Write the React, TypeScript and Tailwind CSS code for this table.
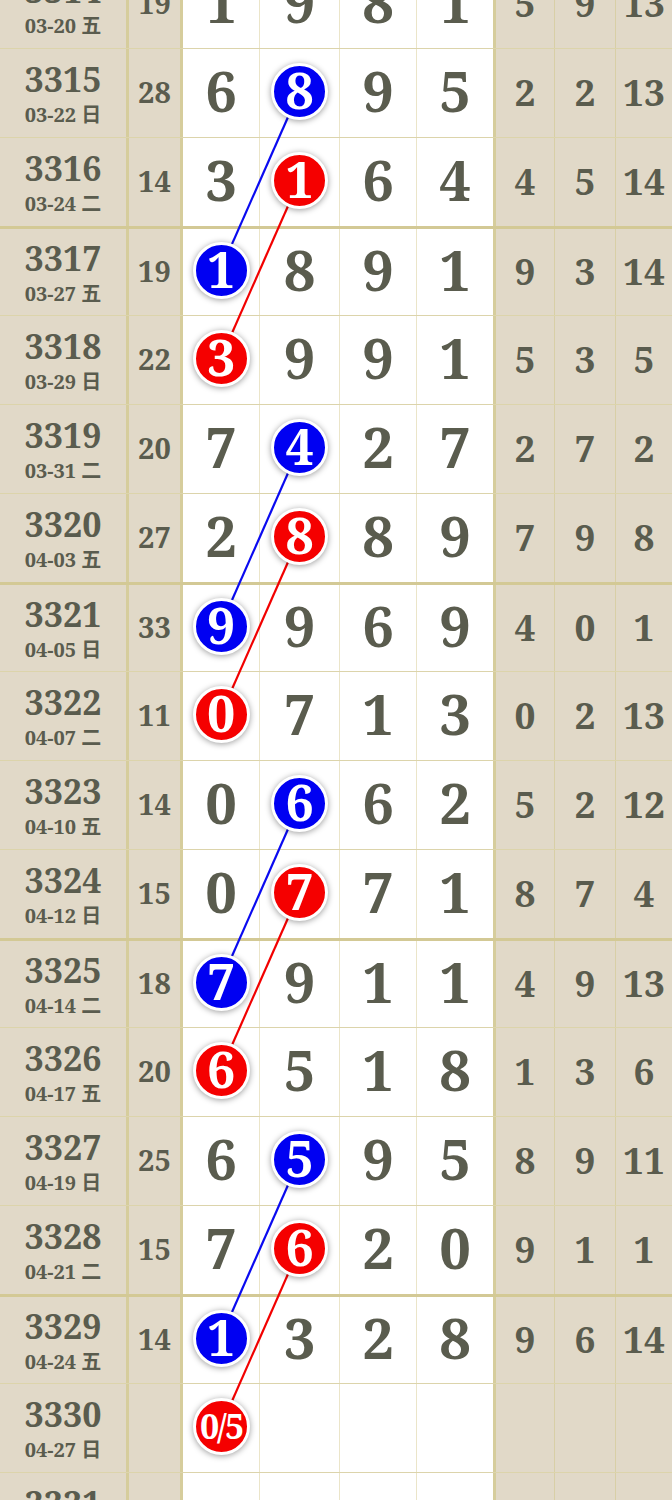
import React from "react";

type Ball = { col: number; color: "blue" | "red"; text: string };
type Row = {
  issue: string;
  date: string;
  sum: string;
  nums: string[];
  tail: string[];
  ball?: Ball;
};

const rows: Row[] = [
  { issue: "3314", date: "03-20 五", sum: "19", nums: ["1", "9", "8", "1"], tail: ["5", "9", "13"] },
  { issue: "3315", date: "03-22 日", sum: "28", nums: ["6", "8", "9", "5"], tail: ["2", "2", "13"], ball: { col: 1, color: "blue", text: "8" } },
  { issue: "3316", date: "03-24 二", sum: "14", nums: ["3", "1", "6", "4"], tail: ["4", "5", "14"], ball: { col: 1, color: "red", text: "1" } },
  { issue: "3317", date: "03-27 五", sum: "19", nums: ["1", "8", "9", "1"], tail: ["9", "3", "14"], ball: { col: 0, color: "blue", text: "1" } },
  { issue: "3318", date: "03-29 日", sum: "22", nums: ["3", "9", "9", "1"], tail: ["5", "3", "5"], ball: { col: 0, color: "red", text: "3" } },
  { issue: "3319", date: "03-31 二", sum: "20", nums: ["7", "4", "2", "7"], tail: ["2", "7", "2"], ball: { col: 1, color: "blue", text: "4" } },
  { issue: "3320", date: "04-03 五", sum: "27", nums: ["2", "8", "8", "9"], tail: ["7", "9", "8"], ball: { col: 1, color: "red", text: "8" } },
  { issue: "3321", date: "04-05 日", sum: "33", nums: ["9", "9", "6", "9"], tail: ["4", "0", "1"], ball: { col: 0, color: "blue", text: "9" } },
  { issue: "3322", date: "04-07 二", sum: "11", nums: ["0", "7", "1", "3"], tail: ["0", "2", "13"], ball: { col: 0, color: "red", text: "0" } },
  { issue: "3323", date: "04-10 五", sum: "14", nums: ["0", "6", "6", "2"], tail: ["5", "2", "12"], ball: { col: 1, color: "blue", text: "6" } },
  { issue: "3324", date: "04-12 日", sum: "15", nums: ["0", "7", "7", "1"], tail: ["8", "7", "4"], ball: { col: 1, color: "red", text: "7" } },
  { issue: "3325", date: "04-14 二", sum: "18", nums: ["7", "9", "1", "1"], tail: ["4", "9", "13"], ball: { col: 0, color: "blue", text: "7" } },
  { issue: "3326", date: "04-17 五", sum: "20", nums: ["6", "5", "1", "8"], tail: ["1", "3", "6"], ball: { col: 0, color: "red", text: "6" } },
  { issue: "3327", date: "04-19 日", sum: "25", nums: ["6", "5", "9", "5"], tail: ["8", "9", "11"], ball: { col: 1, color: "blue", text: "5" } },
  { issue: "3328", date: "04-21 二", sum: "15", nums: ["7", "6", "2", "0"], tail: ["9", "1", "1"], ball: { col: 1, color: "red", text: "6" } },
  { issue: "3329", date: "04-24 五", sum: "14", nums: ["1", "3", "2", "8"], tail: ["9", "6", "14"], ball: { col: 0, color: "blue", text: "1" } },
  { issue: "3330", date: "04-27 日", sum: "", nums: ["0/5", "", "", ""], tail: ["", "", ""], ball: { col: 0, color: "red", text: "0/5" } },
  { issue: "3331", date: "04-29 二", sum: "", nums: ["", "", "", ""], tail: ["", "", ""] },
];

const ROW_H = 89;
const colX = [221, 299.5];
// ball centre sits ~2px above the middle of the row
const cy = (i: number) => ROW_H * i + 43;

const links: { from: [number, number]; to: [number, number]; color: string }[] = [];
for (let s = 1; s + 3 < rows.length; s += 4) {
  links.push({ from: [1, s], to: [0, s + 2], color: "#0a0af0" });
  links.push({ from: [1, s + 1], to: [0, s + 3], color: "#f20000" });
}

const serif = "font-['Noto_Serif','DejaVu_Serif','Noto_Sans_CJK_SC',serif] font-bold";

function BallView({ b }: { b: Ball }) {
  const small = b.text.length > 1;
  return (
    <div
      className={`relative z-10 -mt-[4px] flex h-[57px] w-[57px] items-center justify-center rounded-full border-[3px] border-white text-white shadow-[0_1px_6px_rgba(0,0,0,0.4)] ${
        b.color === "blue" ? "bg-[#0000f2]" : "bg-[#f50000]"
      }`}
    >
      <span className={`${serif} leading-none ${small ? "text-[34px] tracking-[-2px]" : "-mt-[2px] text-[50px]"}`}>
        {b.text}
      </span>
    </div>
  );
}

export default function App() {
  return (
    <div className="h-[1500px] w-[672px] overflow-hidden bg-[#e1d9c8] text-[#5a5c4e]">
      <div className="relative -mt-[41px]">
        {rows.map((r, i) => {
          const thick = i % 4 === 3;
          return (
            <div
              key={r.issue}
              className={`box-border grid h-[89px] grid-cols-[129px_54px_77px_80px_77px_79px_59px_61px_56px] ${
                thick ? "border-t-[3px] border-[#d3c995]" : "border-t border-[#dcd4ab]"
              }`}
            >
              <div className="flex flex-col items-center justify-center border-r-[3px] border-[#d6cd9c]">
                <span className={`${serif} text-[34px] leading-none`}>{r.issue}</span>
                <span className={`${serif} mt-[9px] text-[20px] leading-none`}>{r.date}</span>
              </div>
              <div className="flex items-center justify-center border-r-[3px] border-[#d6cd9c] pb-[4px]">
                <span className={`${serif} text-[29px] leading-none`}>{r.sum}</span>
              </div>
              {r.nums.map((n, j) => (
                <div
                  key={j}
                  className={`flex items-center justify-center bg-white ${
                    j === 3 ? "border-r-[3px] border-[#d6cd9c]" : "border-r border-[#ebe5c9]"
                  }`}
                >
                  {r.ball && r.ball.col === j ? (
                    <BallView b={r.ball} />
                  ) : (
                    <span className={`${serif} -mt-[6px] text-[56px] leading-none`}>{n}</span>
                  )}
                </div>
              ))}
              {r.tail.map((t, j) => (
                <div
                  key={j}
                  className={`flex items-center justify-center pb-[3px] ${j < 2 ? "border-r border-[#d8cfa6]" : ""}`}
                >
                  <span className={`${serif} text-[37px] leading-none`}>{t}</span>
                </div>
              ))}
            </div>
          );
        })}
        <svg className="pointer-events-none absolute left-0 top-0" width="672" height={rows.length * ROW_H}>
          {links.map((l, k) => (
            <line
              key={k}
              x1={colX[l.from[0]]}
              y1={cy(l.from[1])}
              x2={colX[l.to[0]]}
              y2={cy(l.to[1])}
              stroke={l.color}
              strokeWidth={2.2}
            />
          ))}
        </svg>
      </div>
    </div>
  );
}
